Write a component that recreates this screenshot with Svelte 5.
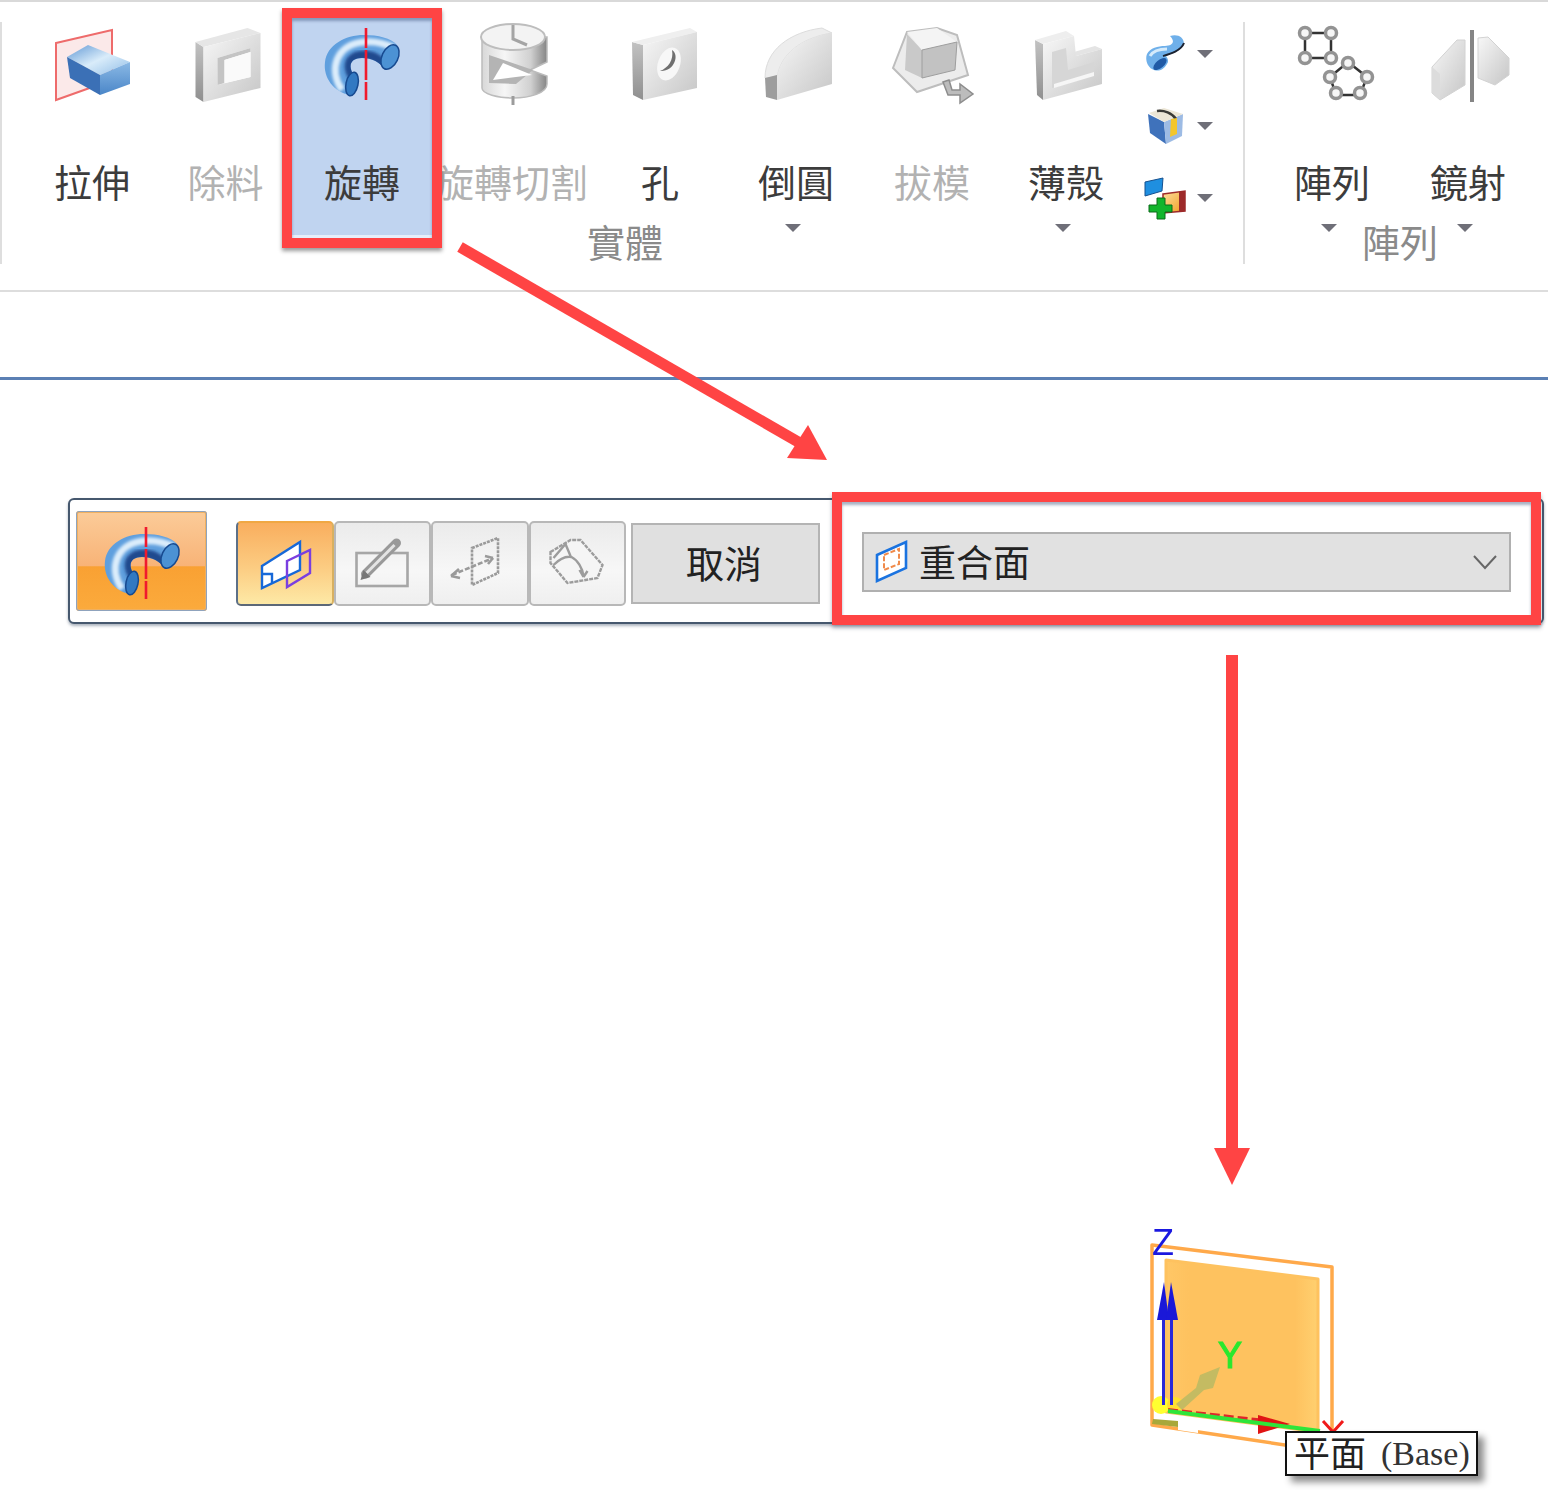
<script>
	// ribbon commands: cx is the page x of the icon centre (icons are drawn in page coordinates)
	const solids = [
		{ label: '拉伸', w: 134, cx: 92, icon: 'extrude' },
		{ label: '除料', w: 133, cx: 225.5, icon: 'cutout', muted: true },
		{ label: '旋轉', w: 140, cx: 362, icon: 'tube', marked: true },
		{ label: '旋轉切割', w: 160, cx: 512, icon: 'revcut', muted: true },
		{ label: '孔', w: 136, cx: 660, icon: 'hole' },
		{ label: '倒圓', w: 136, cx: 796, icon: 'round', caret: true },
		{ label: '拔模', w: 136, cx: 932, icon: 'draft', muted: true },
		{ label: '薄殼', w: 132, cx: 1066, icon: 'shell', caret: true }
	];
	const patterns = [
		{ label: '陣列', w: 136, cx: 1332, icon: 'pattern', caret: true },
		{ label: '鏡射', w: 136, cx: 1468, icon: 'mirror', caret: true }
	];
	const small = [
		{ icon: 'sweep', y: 31 },
		{ icon: 'boxcut', y: 103 },
		{ icon: 'addbody', y: 175 }
	];
	const modes = ['planes', 'sketch', 'normal', 'sector'];
</script>

{#snippet tool(t)}
	<div class="tool" class:marked={t.marked} style="width:{t.w}px">
		<svg class="tool-icon soft" width="120" height="90" viewBox="{t.cx - 60} 20 120 90">
			<use href="#ic-{t.icon}" />
		</svg>
		<div class="label" class:muted={t.muted}>{t.label}</div>
		{#if t.caret}<span class="caret"></span>{/if}
	</div>
{/snippet}

<div class="page">
	<svg class="defs" width="0" height="0">
		<defs>
			<linearGradient id="grey" x1="0" y1="0" x2="1" y2="1">
				<stop offset="0" stop-color="#f7f7f7" />
				<stop offset="1" stop-color="#c6c6c6" />
			</linearGradient>
			<linearGradient id="greyside" x1="0" y1="0" x2="0" y2="1">
				<stop offset="0" stop-color="#c2c2c2" />
				<stop offset="1" stop-color="#8f8f8f" />
			</linearGradient>
			<linearGradient id="cyl" x1="0" y1="0" x2="1" y2="0">
				<stop offset="0" stop-color="#d8d8d8" />
				<stop offset="0.35" stop-color="#f6f6f6" />
				<stop offset="0.75" stop-color="#d0d0d0" />
				<stop offset="1" stop-color="#858585" />
			</linearGradient>
			<linearGradient id="boxtop" x1="0" y1="0" x2="1" y2="1">
				<stop offset="0" stop-color="#5f97d4" />
				<stop offset="0.5" stop-color="#d9ecfa" />
				<stop offset="1" stop-color="#8fbce6" />
			</linearGradient>
			<linearGradient id="boxright" x1="0" y1="0" x2="0" y2="1">
				<stop offset="0" stop-color="#8bb9e5" />
				<stop offset="1" stop-color="#4a86c8" />
			</linearGradient>
			<linearGradient id="orange" x1="0" y1="0" x2="1" y2="1">
				<stop offset="0" stop-color="#fde0a0" />
				<stop offset="1" stop-color="#f29a1c" />
			</linearGradient>
			<linearGradient id="planefill" x1="0" y1="0" x2="1" y2="0">
				<stop offset="0" stop-color="#ffc766" />
				<stop offset="0.15" stop-color="#fec25f" />
				<stop offset="0.85" stop-color="#fec25f" />
				<stop offset="1" stop-color="#ffd070" />
			</linearGradient>
			<filter id="smear" x="-20%" y="-20%" width="140%" height="140%">
				<feGaussianBlur stdDeviation="1.6" />
			</filter>
			<clipPath id="tubeclip">
				<path d="M350 95 C334 92 323 78 325 62 C327 45 345 35 364 35 C378 35 391 38 397 45 L385 70 C380 62 372 58 362 58 C353 58 348 63 352 72Z" />
			</clipPath>

			<g id="ic-extrude">
				<polygon points="56,43 112,30 112,80 56,100" fill="#fbe9e9" stroke="#ee6b6b" stroke-width="2" />
				<polygon points="67,57 88,45 130,62 100,75" fill="url(#boxtop)" />
				<polygon points="67,57 100,75 100,95 70,78" fill="#3b70b6" />
				<polygon points="100,75 130,62 130,84 100,95" fill="url(#boxright)" />
			</g>

			<g id="ic-cutout">
				<polygon points="195,42 203,47 203,102 195,97" fill="url(#greyside)" />
				<polygon points="195,42 247,28 260,33 203,47" fill="#e6e6e6" />
				<path d="M203 47 L260 33 V88 L203 102Z M217 58 V85 L250 77 V48Z" fill="url(#grey)" fill-rule="evenodd" />
				<polygon points="217,58 250,48 250,52 224,60 224,83 217,85" fill="#c4c4c4" />
				<polygon points="224,60 250,52 250,77 224,83" fill="#fafafa" />
			</g>

			<g id="ic-tube">
				<path d="M350 95 C334 92 323 78 325 62 C327 45 345 35 364 35 C378 35 391 38 397 45 L385 70 C380 62 372 58 362 58 C353 58 348 63 352 72Z" fill="#5f9fde" />
				<g clip-path="url(#tubeclip)">
					<path d="M342 90 C328 70 336 44 364 42 C376 41 386 44 394 48" fill="none" stroke="#dcedfb" stroke-width="7" filter="url(#smear)" />
					<path d="M352 76 C344 60 355 55 364 55 C372 55 380 59 386 68" fill="none" stroke="#133b80" stroke-width="9" opacity="0.85" filter="url(#smear)" />
				</g>
				<ellipse cx="352" cy="84" rx="6" ry="12" transform="rotate(12 352 84)" fill="#3279c2" stroke="#174a90" stroke-width="1.5" />
				<ellipse cx="390" cy="57" rx="8" ry="13" transform="rotate(25 390 57)" fill="#4c92d4" stroke="#174a90" stroke-width="1.5" />
				<path d="M366 28 V100" stroke="#f01a2e" stroke-width="2.6" stroke-dasharray="20 2 30 2 20" />
			</g>

			<g id="ic-revcut">
				<path d="M482 37 V88 C482 94 498 98 513 98 C530 98 547 93 547 84 V76 L530 70 L547 62 V37Z" fill="url(#cyl)" stroke="#bcbcbc" stroke-width="1.5" />
				<ellipse cx="513" cy="37" rx="32" ry="13" fill="#f3f3f3" stroke="#bdbdbd" stroke-width="2" />
				<polygon points="489,55 533,70 516,84 489,83" fill="#b4b4b4" />
				<polygon points="503,63 532,75 493,80" fill="#ffffff" />
				<path d="M513 25 V39 L527 45" fill="none" stroke="#a4a4a4" stroke-width="3" />
				<path d="M513 96 V105" stroke="#9c9c9c" stroke-width="3" />
			</g>

			<g id="ic-hole">
				<polygon points="632,42 643,45 643,100 633,95" fill="url(#greyside)" />
				<polygon points="632,42 690,28 697,32 643,45" fill="#efefef" />
				<polygon points="643,45 697,32 697,88 643,100" fill="url(#grey)" />
				<ellipse cx="669" cy="64" rx="11" ry="17" transform="rotate(20 669 64)" fill="#f7f7f7" />
				<path d="M672 50 C680 55 674 72 660 71 C668 68 674 60 672 50Z" fill="#6f6f6f" />
			</g>

			<g id="ic-round">
				<path d="M765 78 C765 50 790 32 822 28 L832 33 C800 38 780 55 777 78Z" fill="#ededed" stroke="#dcdcdc" />
				<path d="M777 78 C780 55 800 38 832 33 V84 L777 100Z" fill="url(#grey)" />
				<polygon points="765,78 777,75 777,100 766,97" fill="#9d9d9d" />
			</g>

			<g id="ic-draft">
				<polygon points="893,68 907,32 937,28 957,35 968,75 917,92" fill="#ececec" stroke="#bdbdbd" stroke-width="2" />
				<polygon points="907,34 922,50 922,78 905,70" fill="#c9c9c9" />
				<polygon points="907,32 937,28 957,42 922,50" fill="#f4f4f4" />
				<polygon points="922,50 957,42 955,70 922,78" fill="#c2c2c2" stroke="#9e9e9e" />
				<path d="M943 82 L948 95 H960 V103 L973 94 L960 84 V90 H952 L949 80Z" fill="#bcbcbc" stroke="#8d8d8d" stroke-width="1.5" />
			</g>

			<g id="ic-shell">
				<polygon points="1035,40 1043,44 1043,100 1037,95" fill="url(#greyside)" />
				<polygon points="1035,40 1066,31 1074,36 1043,44" fill="#eeeeee" />
				<polygon points="1074,52 1095,46 1102,49 1076,56" fill="#e4e4e4" />
				<polygon points="1043,44 1074,36 1076,56 1102,49 1102,84 1043,100" fill="url(#grey)" />
				<polygon points="1052,52 1066,48 1068,70 1094,62 1094,76 1052,88" fill="#d6d6d6" />
				<polygon points="1054,84 1094,72 1094,76 1054,88" fill="#f6f6f6" />
			</g>

			<g id="ic-sweep">
				<path d="M1170 35 C1180 32 1186 39 1183 45 C1179 51 1170 53 1166 55 C1168 58 1169 60 1167 63 C1163 70 1157 71 1152 68 C1147 65 1145 58 1147 53 C1150 47 1158 45 1165 45 C1172 45 1176 41 1170 35Z" fill="#6fb0ea" />
				<path d="M1150 55 C1153 50 1160 48 1167 48" fill="none" stroke="#d5ebfb" stroke-width="3" />
				<path d="M1184 42 C1181 50 1170 53 1163 55" fill="none" stroke="#1c2230" stroke-width="2" />
				<ellipse cx="1160" cy="63" rx="4" ry="8" transform="rotate(50 1160 63)" fill="#1f5aa6" />
			</g>

			<g id="ic-boxcut">
				<polygon points="1148,113 1164,121 1166,143 1150,132" fill="#3f72bb" />
				<polygon points="1164,121 1183,113 1182,135 1166,143" fill="#9dbbe4" />
				<polygon points="1149,112 1164,107 1183,113 1164,121" fill="#ece6d6" />
				<path d="M1157 110 C1164 109 1172 112 1176 118" fill="none" stroke="#3a3a36" stroke-width="2.5" />
				<path d="M1171 118 L1177 117 V133 L1170 136Z" fill="#f3c62c" />
			</g>

			<g id="ic-addbody">
				<polygon points="1145,181 1163,177 1162,190 1145,195" fill="#1f8fe0" stroke="#15508f" />
				<polygon points="1163,193 1185,190 1185,210 1163,212" fill="url(#orange)" stroke="#9d2a2a" stroke-width="1.5" />
				<polygon points="1179,191 1185,190 1185,210 1179,211" fill="#9d2a2a" />
				<path d="M1149 204 H1157 V197 H1165 V204 H1172 V211 H1165 V218 H1157 V211 H1149Z" fill="#12b52c" stroke="#0a6b19" />
			</g>

			<g id="ic-pattern" fill="#f6f6f6" stroke="#939393" stroke-width="3.5">
				<path d="M1305 33 H1331 V58 H1305Z" fill="none" stroke="#333" stroke-width="2.5" />
				<circle cx="1305" cy="33" r="5.5" />
				<circle cx="1331" cy="33" r="5.5" />
				<circle cx="1305" cy="58" r="5.5" />
				<circle cx="1331" cy="58" r="5.5" />
				<path d="M1348 62 L1367 77 L1360 95 H1336 L1330 77Z" fill="none" stroke="#333" stroke-width="2.5" />
				<circle cx="1348" cy="63" r="5.5" />
				<circle cx="1367" cy="77" r="5.5" />
				<circle cx="1360" cy="93" r="5.5" />
				<circle cx="1336" cy="93" r="5.5" />
				<circle cx="1330" cy="77" r="5.5" />
			</g>

			<g id="ic-mirror">
				<polygon points="1432,67 1457,40 1465,40 1465,85 1440,100 1432,93" fill="url(#grey)" stroke="#d2d2d2" />
				<polygon points="1432,67 1440,74 1440,100 1432,93" fill="#dcdcdc" />
				<polygon points="1478,38 1488,37 1509,58 1509,75 1495,85 1478,78" fill="url(#grey)" stroke="#d2d2d2" />
				<rect x="1470" y="30" width="4" height="72" fill="#858585" />
			</g>

			<g id="ic-planes" fill="none" stroke-width="2.4">
				<polygon points="262,566 300,542 300,570 262,588" fill="#fff" stroke="#1668d8" />
				<path d="M262 574 H272 V583" stroke="#1668d8" />
				<polygon points="287,561 310,550 310,573 287,587" stroke="#7a3fe0" />
			</g>
			<g id="ic-sketch">
				<rect x="356" y="553" width="51" height="33" fill="none" stroke="#a6a6a6" stroke-width="2.6" />
				<path d="M365 574 L396 543" stroke="#999" stroke-width="9" stroke-linecap="round" />
				<path d="M366 573 L394 545" stroke="#e4e4e4" stroke-width="3" />
				<path d="M360 580 L363 570 L370 577Z" fill="#777" />
			</g>
			<g id="ic-normal" fill="none" stroke="#9a9a9a" stroke-width="2.6">
				<polygon points="472,548 498,538 498,573 472,585" stroke-dasharray="3 1" />
				<path d="M452 575 L493 558" stroke-dasharray="5 2" />
				<path d="M451 576 L459 569 M451 576 L460 578 M493 558 L485 556 M493 558 L488 564" />
			</g>
			<g id="ic-sector" fill="none" stroke="#9c9c9c" stroke-width="2.4">
				<path d="M550 552 L570 540 H580 L602 565 L597 578 L567 583 L550 563Z" fill="#f5f5f5" stroke-dasharray="4 1" />
				<path d="M553 558 L565 544 L570 556 M553 565 C560 558 566 556 571 557 C577 560 582 568 583 576 M583 577 L579 570 M583 577 L587 571" />
			</g>
		</defs>
	</svg>

	<header class="ribbon">
		<div class="sep"></div>
		<section class="group solids">
			<div class="tools">
				{#each solids as t}
					{@render tool(t)}
				{/each}
				<div class="stack">
					{#each small as s}
						<div class="stack-row">
							<svg class="soft" width="44" height="44" viewBox="1143 {s.y} 44 44"><use href="#ic-{s.icon}" /></svg>
							<span class="caret"></span>
						</div>
					{/each}
				</div>
			</div>
			<div class="caption">實體</div>
		</section>
		<div class="sep"></div>
		<section class="group patterns">
			<div class="tools">
				{#each patterns as t}
					{@render tool(t)}
				{/each}
			</div>
			<div class="caption">陣列</div>
		</section>
	</header>

	<div class="rule"></div>

	<div class="cmdbar">
		<div class="main-btn">
			<svg class="soft" width="131" height="100" viewBox="296 12 131 100">
				<use href="#ic-tube" />
			</svg>
		</div>
		<div class="modes">
			{#each modes as m, i}
				<div class="mode" class:on={i === 0}>
					<svg class="soft" width="97" height="85" viewBox="{236 + i * 97.5} 521 97 85"><use href="#ic-{m}" /></svg>
				</div>
			{/each}
		</div>
		<button class="cancel">取消</button>
		<div class="select-wrap">
			<div class="select">
				<svg class="soft" width="36" height="48" viewBox="872 539 36 48">
					<polygon points="876,556 905,543 905,569 876,582" fill="#fff" stroke="#1a73e0" stroke-width="2.6" />
					<polygon points="883,556 898,550 898,565 883,571" fill="none" stroke="#f08a4a" stroke-width="2" stroke-dasharray="5 2" />
				</svg>
				<span>重合面</span>
				<svg class="chev" width="26" height="16" viewBox="0 0 26 16">
					<path d="M2 2 L13 14 L24 2" fill="none" stroke="#666" stroke-width="2" />
				</svg>
			</div>
		</div>
	</div>

	<svg class="plane soft" width="210" height="245" viewBox="1140 1215 210 245">
		<polygon points="1152,1245 1332,1267 1332,1452 1152,1425" fill="none" stroke="#ffa94a" stroke-width="3.5" stroke-linejoin="round" />
		<polygon points="1166,1260 1318,1279 1318,1432 1166,1412" fill="url(#planefill)" stroke="#fec25f" stroke-width="3" stroke-linejoin="round" />
		<path d="M1153 1419 L1178 1421 V1427 L1152 1424Z" fill="#a8a83a" />
		<path d="M1178 1425 L1198 1428 V1433 L1178 1430Z" fill="#fff" />
		<circle cx="1161" cy="1405" r="9" fill="#ffff30" />
		<circle cx="1175" cy="1405" r="8" fill="#ffe030" />
		<rect x="1162" y="1300" width="3" height="105" fill="#2a28d8" />
		<rect x="1170" y="1300" width="3" height="105" fill="#2a28d8" />
		<polygon points="1164,1282 1157,1320 1169,1320" fill="#1a18d8" />
		<polygon points="1171,1282 1166,1320 1178,1320" fill="#1a18d8" />
		<path d="M1176 1404 L1196 1388 L1200 1375 L1220 1367 L1213 1388 L1204 1390 L1182 1410Z" fill="#c4bb62" />
		<path d="M1168 1410 L1265 1421" stroke="#e0252a" stroke-width="4" stroke-dasharray="10 4" />
		<polygon points="1258,1415 1290,1424 1258,1434" fill="#e01414" />
		<path d="M1168 1411 L1320 1431" stroke="#2ee53a" stroke-width="4" />
		<text x="1163" y="1255" class="axis z">Z</text>
		<text x="1230" y="1368" class="axis y">Y</text>
		<path d="M1323 1421 L1333 1432 L1343 1421" fill="none" stroke="#f01a1a" stroke-width="3" />
	</svg>

	<div class="tip"><span class="tip-cjk">平面</span><span class="tip-base">(Base)</span></div>

	<svg class="arrows" width="1548" height="1500" viewBox="0 0 1548 1500">
		<path d="M460 247 L800 443" stroke="#ff4444" stroke-width="11" />
		<polygon points="827,460 787,458 808,425" fill="#ff4444" />
		<rect x="1226" y="655" width="12" height="496" fill="#ff4444" />
		<polygon points="1214,1148 1250,1148 1232,1185" fill="#ff4444" />
	</svg>
</div>

<style>
	:global(body) {
		background: #fff;
	}
	.page {
		position: relative;
		width: 1548px;
		height: 1500px;
		overflow: hidden;
		font-family: 'Noto Sans CJK TC', 'Noto Sans', sans-serif;
		color: #3c3c3c;
	}
	.defs {
		position: absolute;
	}
	.soft {
		filter: blur(0.6px);
	}
	.ribbon {
		box-sizing: border-box;
		display: flex;
		align-items: flex-start;
		height: 292px;
		padding-top: 16px;
		border-top: 2px solid #d9d9d9;
		border-bottom: 2px solid #dddddd;
	}
	.sep {
		flex: none;
		width: 2px;
		height: 242px;
		margin-top: 4px;
		background: #dedede;
	}
	.group {
		flex: none;
	}
	.solids {
		width: 1241px;
		padding-left: 23px;
		box-sizing: border-box;
	}
	.patterns {
		width: 303px;
		padding-left: 19px;
		box-sizing: border-box;
	}
	.tools {
		display: flex;
		height: 220px;
	}
	.tool {
		flex: none;
		display: flex;
		flex-direction: column;
		align-items: center;
		padding-top: 2px;
		box-sizing: border-box;
		height: 220px;
	}
	.tool.marked {
		position: relative;
		background: #c0d4f0;
		box-shadow:
			0 0 0 10px #ff4444,
			0 3px 4px 10px rgba(0, 0, 0, 0.4),
			inset 0 3px 3px rgba(60, 80, 120, 0.45),
			inset 0 -3px 0 #e6eefa;
	}
	.tool-icon {
		display: block;
		flex: none;
	}
	.label {
		margin-top: 49px;
		font-size: 38px;
		line-height: 44px;
		white-space: nowrap;
	}
	.label.muted {
		color: #b2b2b2;
	}
	.caret {
		display: block;
		flex: none;
		width: 0;
		height: 0;
		border-left: 8px solid transparent;
		border-right: 8px solid transparent;
		border-top: 8px solid #6f6f78;
	}
	.tool .caret {
		margin-top: 21px;
		margin-right: 6px;
	}
	.stack {
		flex: none;
		width: 111px;
		padding: 14px 0 0 11px;
		box-sizing: border-box;
		display: flex;
		flex-direction: column;
		gap: 28px;
	}
	.stack-row {
		display: flex;
		align-items: center;
		gap: 10px;
		height: 44px;
	}
	.caption {
		margin-top: -15px;
		font-size: 38px;
		line-height: 36px;
		text-align: center;
		color: #8a8a8a;
	}
	.solids .caption {
		padding-right: 18px;
	}
	.patterns .caption {
		padding-right: 12px;
	}
	.rule {
		height: 3px;
		margin-top: 85px;
		background: #5b80b4;
	}
	.cmdbar {
		box-sizing: border-box;
		display: flex;
		align-items: center;
		width: 1476px;
		height: 126px;
		margin: 118px 0 0 68px;
		padding-left: 6px;
		background: #fff;
		border: 2px solid #46586e;
		border-radius: 6px;
		box-shadow: 0 2px 3px rgba(70, 88, 110, 0.45);
	}
	.main-btn {
		flex: none;
		box-sizing: border-box;
		width: 131px;
		height: 100px;
		border: 2px solid #f0b060;
		outline: 1px solid #8fa3bd;
		outline-offset: -1px;
		border-radius: 3px;
		background: linear-gradient(#fbcb98, #f8b377 55%, #f9a133 56%, #fbaa3c);
	}
	.main-btn svg {
		display: block;
		margin: -2px;
	}
	.modes {
		flex: none;
		display: flex;
		margin: 5px 0 0 29px;
	}
	.mode {
		box-sizing: border-box;
		width: 97.5px;
		height: 85px;
		border: 2px solid #b8b8b8;
		border-radius: 5px;
		background: linear-gradient(#ebebeb, #f7f7f7 60%, #efefef);
	}
	.mode svg {
		display: block;
		margin: -2px;
	}
	.mode.on {
		border-color: #f0a844 #d8b060 #5c6878 #5c7088;
		background: linear-gradient(#f9ae5e, #fccc82 55%, #fde9a6);
	}
	.cancel {
		flex: none;
		box-sizing: border-box;
		width: 189px;
		height: 81px;
		margin: 5px 0 0 5px;
		padding: 0 3px 4px 0;
		background: #e0e0e0;
		border: 2px solid #b4b4b4;
		font: inherit;
		font-size: 38px;
		color: #222;
	}
	.select-wrap {
		position: relative;
		flex: none;
		align-self: flex-start;
		box-sizing: border-box;
		width: 689px;
		height: 113px;
		margin: 2px 0 0 22px;
		padding: 30px 20px 0;
		background: #fff;
		box-shadow:
			0 0 0 10px #ff4444,
			0 3px 4px 10px rgba(60, 70, 90, 0.4),
			inset 0 3px 3px rgba(60, 80, 120, 0.45);
	}
	.select {
		box-sizing: border-box;
		display: flex;
		align-items: center;
		height: 60px;
		padding-left: 9px;
		background: #e1e1e1;
		border: 2px solid #b0b0b0;
		font-size: 37px;
		color: #222;
	}
	.select span {
		margin: -2px 0 0 10px;
	}
	.chev {
		margin-left: auto;
		margin-right: 11px;
	}
	.plane {
		position: absolute;
		left: 1140px;
		top: 1215px;
	}
	.axis {
		font-family: 'Liberation Sans', sans-serif;
		font-size: 36px;
		text-anchor: middle;
	}
	.axis.z {
		fill: #1a18e0;
	}
	.axis.y {
		fill: #2ae82e;
		stroke: #2ae82e;
		stroke-width: 1.2;
	}
	.tip {
		position: absolute;
		left: 1285px;
		top: 1431px;
		box-sizing: border-box;
		width: 193px;
		height: 45px;
		display: flex;
		align-items: center;
		padding-left: 7px;
		background: #fff;
		border: 2px solid #111;
		box-shadow: 6px 6px 7px rgba(0, 0, 0, 0.45);
		color: #222;
		white-space: nowrap;
	}
	.tip-cjk {
		font-size: 36px;
		line-height: 40px;
		margin-top: -5px;
	}
	.tip-base {
		margin-left: 15px;
		font-family: 'Liberation Serif', serif;
		font-size: 34px;
		line-height: 40px;
		color: #333;
	}
	.arrows {
		position: absolute;
		left: 0;
		top: 0;
		pointer-events: none;
	}
</style>
